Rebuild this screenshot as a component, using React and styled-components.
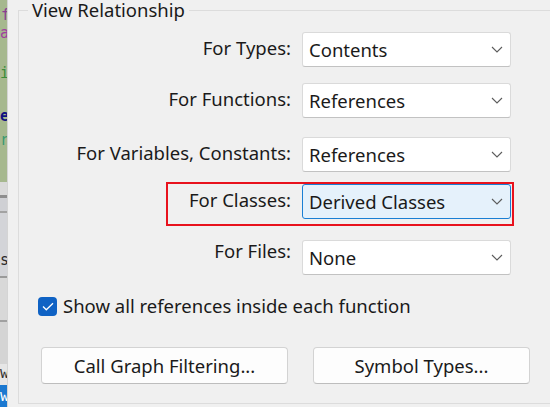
import React from 'react';
import styled, { createGlobalStyle } from 'styled-components';

const GlobalStyle = createGlobalStyle`
  html, body {
    margin: 0;
    padding: 0;
    background: #f0f0f0;
    overflow: hidden;
  }
  body {
    font-family: "Segoe UI", "Noto Sans", "Open Sans", sans-serif;
    color: #1a1a1a;
  }
`;

const FONT = '18.5px';

const Window = styled.div`
  display: flex;
  width: 550px;
  height: 407px;
  overflow: hidden;
  background: #f0f0f0;
`;

// sliver of the code editor behind the dialog
const EditorStrip = styled.div`
  width: 7px;
  flex: none;
  display: flex;
  flex-direction: column;
  overflow: hidden;
  border-right: 1px solid #d4d4d4;
  font-family: "DejaVu Sans Mono", monospace;
  font-size: 15px;
`;

const StripBand = styled.div`
  flex: none;
  height: ${p => p.$h}px;
  line-height: ${p => p.$h}px;
  background: ${p => p.$bg};
  color: ${p => p.$color || '#333'};
  font-weight: ${p => (p.$bold ? 700 : 400)};
  padding-left: ${p => p.$indent || 0}px;
  white-space: nowrap;
`;

const Dialog = styled.div`
  flex: 1;
  padding-left: 10px;
`;

const GroupBox = styled.fieldset`
  margin: 0;
  padding: 0 0 19px 0;
  width: 560px;
  border: 1px solid #dcdcdc;
  border-radius: 0;
`;

const Legend = styled.legend`
  margin-left: 9px;
  padding: 0 4px;
  font-size: ${FONT};
  line-height: 20px;
  color: #1a1a1a;
`;

const FieldRow = styled.div`
  position: relative;
  display: flex;
  align-items: flex-start;
  margin-top: ${p => p.$top}px;

  ${p => p.$highlight && `
    &::after {
      content: '';
      position: absolute;
      left: 147px;
      top: -2px;
      width: 348px;
      height: 44px;
      box-sizing: border-box;
      border: 2px solid #e8121d;
      pointer-events: none;
    }
  `}
`;

const Label = styled.div`
  width: 272px;
  margin-right: 11px;
  padding-top: ${p => p.$shift ?? 5}px;
  text-align: right;
  font-size: ${FONT};
  line-height: 22px;
  white-space: nowrap;
`;

const Combo = styled.div`
  width: 209px;
  height: 35px;
  box-sizing: border-box;
  display: flex;
  align-items: center;
  justify-content: space-between;
  padding: 0 7px 0 6px;
  background: ${p => (p.$focused ? '#e5f1fb' : '#ffffff')};
  border: 1px solid ${p => (p.$focused ? '#1a7fd4' : '#dadada')};
  border-bottom-color: ${p => (p.$focused ? '#1a7fd4' : '#c2c2c2')};
  border-radius: 3px;
  font-size: ${FONT};
  white-space: nowrap;
`;

const Chevron = () => (
  <svg width="12" height="7" viewBox="0 0 12 7">
    <path d="M1 1 L6 6 L11 1" fill="none" stroke="#5c5c5c" strokeWidth="1.1" />
  </svg>
);

const CheckRow = styled.label`
  display: flex;
  align-items: center;
  gap: 6px;
  margin: 20px 0 0 19px;
  font-size: ${FONT};
  line-height: 22px;
  white-space: nowrap;
`;

const CheckBox = styled.span`
  width: 19px;
  height: 19px;
  flex: none;
  box-sizing: border-box;
  display: flex;
  align-items: center;
  justify-content: center;
  background: #0f62c4;
  border-radius: 4px;
`;

const ButtonRow = styled.div`
  display: flex;
  gap: 25px;
  margin: 30px 0 0 22px;
`;

const Button = styled.button`
  width: ${p => p.$w}px;
  height: 37px;
  box-sizing: border-box;
  background: #fdfdfd;
  border: 1px solid #d3d3d3;
  border-bottom-color: #bdbdbd;
  border-radius: 4px;
  font-family: inherit;
  font-size: ${FONT};
  color: #1a1a1a;
  padding: 0;
  white-space: nowrap;
`;

const green = '#a6b88e';
const stripBands = [
  { h: 6, bg: green },
  { h: 18, bg: green, text: 'f', color: '#8a3c92', indent: 1 },
  { h: 18, bg: green, text: 'a', color: '#a0409f', indent: 0 },
  { h: 22, bg: green },
  { h: 18, bg: green, text: 'i', color: '#3b8c3b', indent: 0 },
  { h: 25, bg: green },
  { h: 18, bg: green, text: 'e', color: '#101080', bold: true, indent: 0 },
  { h: 6, bg: green },
  { h: 18, bg: green, text: 'r', color: '#3a9a72', indent: 0 },
  { h: 33, bg: green },
  { h: 13, bg: '#dadada' },
  { h: 3, bg: '#8e8e8e' },
  { h: 13, bg: '#cfd0d4' },
  { h: 2, bg: '#a2a2a2' },
  { h: 37, bg: '#d3d4d8' },
  { h: 20, bg: '#d3d4d8', text: 's', color: '#2a2a2a', indent: 0 },
  { h: 6, bg: '#d3d4d8' },
  { h: 2, bg: '#9a9a9a' },
  { h: 42, bg: '#d8d8d8' },
  { h: 2, bg: '#a0a0a0' },
  { h: 42, bg: '#d4d4d4' },
  { h: 18, bg: '#e6e6e6', text: 'w', color: '#333', indent: 0 },
  { h: 3, bg: '#e6e6e6' },
  { h: 22, bg: '#1b78d0', text: 'w', color: '#ffffff', indent: 0 },
];

const rows = [
  { label: 'For Types:', value: 'Contents', top: 12 },
  { label: 'For Functions:', value: 'References', top: 16 },
  { label: 'For Variables, Constants:', value: 'References', top: 19 },
  { label: 'For Classes:', value: 'Derived Classes', top: 12, focused: true },
  { label: 'For Files:', value: 'None', top: 21, shift: 0 },
];

export default function App() {
  return (
    <>
      <GlobalStyle />
      <Window>
        <EditorStrip>
          {stripBands.map((b, i) => (
            <StripBand key={i} $h={b.h} $bg={b.bg} $color={b.color} $bold={b.bold} $indent={b.indent}>
              {b.text || ''}
            </StripBand>
          ))}
        </EditorStrip>

        <Dialog>
          <GroupBox>
            <Legend>View Relationship</Legend>

            {rows.map(r => (
              <FieldRow key={r.label} $top={r.top} $highlight={r.focused}>
                <Label $shift={r.shift}>{r.label}</Label>
                <Combo $focused={r.focused}>
                  <span>{r.value}</span>
                  <Chevron />
                </Combo>
              </FieldRow>
            ))}

            <CheckRow>
              <CheckBox>
                <svg width="12" height="9" viewBox="0 0 12 9">
                  <path d="M1 4.5 L4.3 7.8 L11 1.2" fill="none" stroke="#ffffff" strokeWidth="1.3" />
                </svg>
              </CheckBox>
              Show all references inside each function
            </CheckRow>

            <ButtonRow>
              <Button $w={247}>Call Graph Filtering...</Button>
              <Button $w={217}>Symbol Types...</Button>
            </ButtonRow>
          </GroupBox>
        </Dialog>
      </Window>
    </>
  );
}
